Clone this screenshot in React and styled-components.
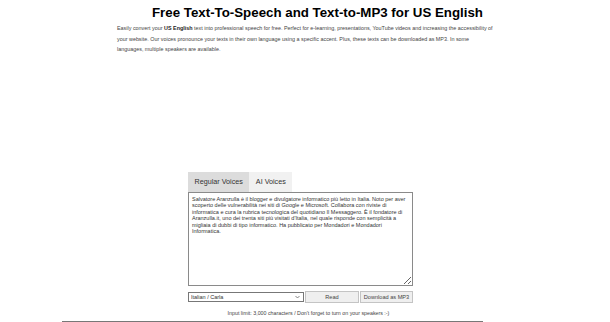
import React, { useState } from 'react';
import styled, { createGlobalStyle } from 'styled-components';

const GlobalStyle = createGlobalStyle`
  html, body {
    margin: 0;
    padding: 0;
    background: #ffffff;
    font-family: "Liberation Sans", Arial, sans-serif;
  }
`;

const Page = styled.div`
  width: 610px;
  height: 322px;
  overflow: hidden;
  display: flex;
  flex-direction: column;
`;

const Intro = styled.header`
  width: 377px;
  margin-left: 117px;
  padding-top: 5px;
`;

const Title = styled.h1`
  margin: 0 -40px 0 -16px;
  font-size: 13.3px;
  font-weight: bold;
  color: #000;
  text-align: center;
  line-height: 16px;
  white-space: nowrap;
`;

const Lead = styled.p`
  margin: 2px 0 0;
  font-size: 5.4px;
  line-height: 10.5px;
  color: #444;
  strong {
    color: #222;
  }
`;

const AdSpace = styled.div`
  height: 117px;
`;

const Tool = styled.section`
  width: 225px;
  margin-left: 188px;
`;

const Tabs = styled.div`
  display: flex;
`;

const Tab = styled.button`
  border: none;
  margin: 0;
  height: 20px;
  padding: 0 6.5px;
  font-family: inherit;
  font-size: 7.2px;
  color: #333;
  background: ${(p) => (p.$active ? '#dcdcdc' : '#f1f1f1')};
  cursor: pointer;
`;

const TextBox = styled.textarea`
  display: block;
  box-sizing: border-box;
  width: 225px;
  height: 94px;
  margin: 0;
  padding: 3px 3px;
  border: 1px solid #8a8a8a;
  font-family: inherit;
  font-size: 5.5px;
  line-height: 6.5px;
  color: #333;
  resize: vertical;
  outline: none;
`;

const Controls = styled.div`
  display: grid;
  grid-template-columns: 116px 54px 53px;
  gap: 1px;
  margin-top: 5px;
  height: 12px;
  align-items: center;
`;

const SelectWrap = styled.div`
  position: relative;
  display: flex;
  height: 10px;
`;

const VoiceSelect = styled.select`
  appearance: none;
  display: block;
  box-sizing: border-box;
  width: 100%;
  height: 10px;
  min-height: 0;
  margin: 0;
  padding: 0 0 0 2px;
  border: 1px solid #777;
  border-radius: 0;
  background: #fff;
  font-family: inherit;
  font-size: 5.5px;
  line-height: 8px;
  color: #333;
  outline: none;
`;

const Chevron = styled.svg`
  position: absolute;
  right: 4px;
  top: 3px;
  width: 5px;
  height: 4px;
  pointer-events: none;
`;

const ActionButton = styled.button`
  box-sizing: border-box;
  margin: 0;
  padding: 0;
  height: 12px;
  border: 1px solid #c4c4c4;
  background: #efefef;
  font-family: inherit;
  font-size: 5.6px;
  color: #444;
  cursor: pointer;
`;

const Note = styled.p`
  margin: 7px -60px 0 -44px;
  text-align: center;
  font-size: 5.3px;
  line-height: 7px;
  color: #444;
  white-space: nowrap;
`;

const Rule = styled.hr`
  margin: 4px 0 0 62px;
  width: 421px;
  border: none;
  border-top: 1px solid #777;
`;

const bio =
  'Salvatore Aranzulla è il blogger e divulgatore informatico più letto in Italia. Noto per aver scoperto delle vulnerabilità nei siti di Google e Microsoft. Collabora con riviste di informatica e cura la rubrica tecnologica del quotidiano Il Messaggero. È il fondatore di Aranzulla.it, uno dei trenta siti più visitati d\'Italia, nel quale risponde con semplicità a migliaia di dubbi di tipo informatico. Ha pubblicato per Mondadori e Mondadori Informatica.';

export default function App() {
  const [tab, setTab] = useState('regular');
  const [text, setText] = useState(bio);

  return (
    <Page>
      <GlobalStyle />
      <Intro>
        <Title>Free Text-To-Speech and Text-to-MP3 for US English</Title>
        <Lead>
          Easily convert your <strong>US English</strong> text into professional speech for free. Perfect for e-learning, presentations, YouTube videos and increasing the accessibility of your website. Our voices pronounce your texts in their own language using a specific accent. Plus, these texts can be downloaded as MP3. In some languages, multiple speakers are available.
        </Lead>
      </Intro>
      <AdSpace />
      <Tool>
        <Tabs>
          <Tab $active={tab === 'regular'} onClick={() => setTab('regular')}>Regular Voices</Tab>
          <Tab $active={tab === 'ai'} onClick={() => setTab('ai')}>AI Voices</Tab>
        </Tabs>
        <TextBox value={text} onChange={(e) => setText(e.target.value)} />
        <Controls>
          <SelectWrap>
            <VoiceSelect defaultValue="carla">
              <option value="carla">Italian / Carla</option>
            </VoiceSelect>
            <Chevron viewBox="0 0 10 8">
              <path d="M1 2 L5 6 L9 2" fill="none" stroke="#555" strokeWidth="1.4" />
            </Chevron>
          </SelectWrap>
          <ActionButton>Read</ActionButton>
          <ActionButton>Download as MP3</ActionButton>
        </Controls>
        <Note>Input limit: 3,000 characters / Don't forget to turn on your speakers :-)</Note>
      </Tool>
      <Rule />
    </Page>
  );
}
